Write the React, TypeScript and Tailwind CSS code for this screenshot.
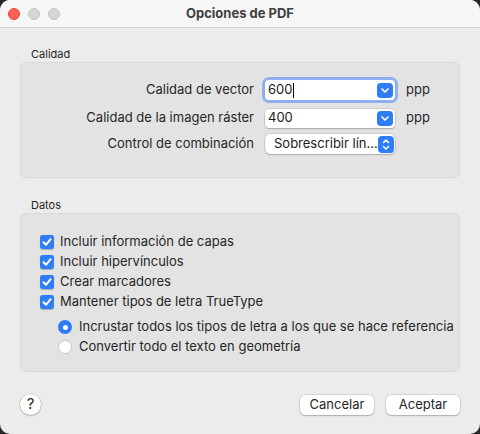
import React from "react";

const font = { fontFamily: "Inter, 'Noto Sans', sans-serif" };

const ChevronDown = () => (
  <svg width="16" height="15" viewBox="0 0 16 15">
    <path d="M5 6 L8 9 L11 6" fill="none" stroke="white" strokeWidth="1.7" strokeLinecap="round" strokeLinejoin="round" />
  </svg>
);

const UpDown = () => (
  <svg width="16" height="17" viewBox="0 0 16 17">
    <path d="M5.5 6.5 L8 4 L10.5 6.5" fill="none" stroke="white" strokeWidth="1.5" strokeLinecap="round" strokeLinejoin="round" />
    <path d="M5.5 10.5 L8 13 L10.5 10.5" fill="none" stroke="white" strokeWidth="1.5" strokeLinecap="round" strokeLinejoin="round" />
  </svg>
);

const Check = () => (
  <svg width="14" height="14" viewBox="0 0 14 14">
    <path d="M3.5 7.2 L6 9.8 L10.6 4.2" fill="none" stroke="white" strokeWidth="2" strokeLinecap="round" strokeLinejoin="round" />
  </svg>
);

const Checkbox: React.FC<{ label: string }> = ({ label }) => (
  <div className="flex h-[20px] items-center">
    <span className="flex h-[14px] w-[14px] items-center justify-center rounded-[3px] bg-[#2f7df6] shadow-[0_0.5px_1px_rgba(0,0,0,0.25)]">
      <Check />
    </span>
    <span className="ml-[6px] text-[13px] text-[#262626]">{label}</span>
  </div>
);

const Radio: React.FC<{ label: string; checked?: boolean }> = ({ label, checked }) => (
  <div className="flex h-[20px] items-center pl-[18px]">
    {checked ? (
      <span className="flex h-[14px] w-[14px] shrink-0 items-center justify-center rounded-full bg-[#2f7df6]">
        <span className="h-[5px] w-[5px] rounded-full bg-white" />
      </span>
    ) : (
      <span className="h-[14px] w-[14px] shrink-0 rounded-full border border-[#c8c8c8] bg-white" />
    )}
    <span className="ml-[7px] whitespace-nowrap text-[13px] text-[#262626]">{label}</span>
  </div>
);

const fieldShadow = "shadow-[0_0_0_0.5px_rgba(0,0,0,0.18),0_1px_1.5px_rgba(0,0,0,0.18)]";

export default function App() {
  return (
    <div className="h-[434px] w-[480px] bg-[#262626]" style={font}>
      <div className="flex h-full w-full flex-col overflow-hidden rounded-[10px] bg-[#ececec]">
        {/* title bar */}
        <div className="grid h-[28px] grid-cols-[1fr_auto_1fr] items-center border-b border-[#d4d4d4] bg-[#f6f6f6]">
          <div className="flex items-center gap-[8px] pl-[8px]">
            <span className="h-[12px] w-[12px] rounded-full border border-[#e2463f] bg-[#ff5f57]" />
            <span className="h-[12px] w-[12px] rounded-full border border-[#c4c4c4] bg-[#d6d6d6]" />
            <span className="h-[12px] w-[12px] rounded-full border border-[#c4c4c4] bg-[#d6d6d6]" />
          </div>
          <div className="text-[13px] font-bold text-[#3f3f3f]">Opciones de PDF</div>
          <div />
        </div>

        <div className="flex flex-1 flex-col px-[20px]">
          {/* Calidad */}
          <div className="mt-[20px] h-[13px] pl-[11px] text-[11px] leading-[13px] text-[#262626]">Calidad</div>
          <div className="mt-[1px] h-[116px] rounded-[6px] border border-[#d9d9d9] bg-[#e3e3e3] pt-[17px]">
            <div className="flex h-[20px] items-center">
              <div className="w-[233px] text-right text-[13px] text-[#262626]">Calidad de vector</div>
              <div className="ml-[11px] flex h-[20px] w-[130px] items-center rounded-[4px] bg-white pl-[3px] pr-[2px] shadow-[0_0_0_3px_#8eb0ee]">
                <span className="text-[13px] text-[#1a1a1a]">600</span>
                <span className="ml-[1px] h-[15px] w-[1px] bg-black" />
                <span className="ml-auto flex h-[15px] w-[16px] items-center justify-center rounded-[4px] bg-[#2f7df6]">
                  <ChevronDown />
                </span>
              </div>
              <div className="ml-[11px] text-[13px] text-[#262626]">ppp</div>
            </div>
            <div className="mt-[8px] flex h-[20px] items-center">
              <div className="w-[233px] text-right text-[13px] text-[#262626]">Calidad de la imagen ráster</div>
              <div className={`ml-[11px] flex h-[19px] w-[130px] items-center rounded-[4px] bg-white pl-[3px] pr-[2px] ${fieldShadow}`}>
                <span className="text-[13px] text-[#1a1a1a]">400</span>
                <span className="ml-auto flex h-[15px] w-[16px] items-center justify-center rounded-[4px] bg-[#2f7df6]">
                  <ChevronDown />
                </span>
              </div>
              <div className="ml-[11px] text-[13px] text-[#262626]">ppp</div>
            </div>
            <div className="mt-[6px] flex h-[20px] items-center">
              <div className="w-[233px] text-right text-[13px] text-[#262626]">Control de combinación</div>
              <div className={`ml-[11px] flex h-[20px] w-[130px] items-center rounded-[5px] bg-white pl-[9px] pr-[2px] ${fieldShadow}`}>
                <span className="whitespace-nowrap text-[13px] text-[#1a1a1a]">Sobrescribir lín...</span>
                <span className="ml-auto flex h-[17px] w-[16px] items-center justify-center rounded-[4px] bg-[#2f7df6]">
                  <UpDown />
                </span>
              </div>
            </div>
          </div>

          {/* Datos */}
          <div className="mt-[21px] h-[13px] pl-[11px] text-[11px] leading-[13px] text-[#262626]">Datos</div>
          <div className="mt-[1px] flex h-[159px] flex-col overflow-hidden rounded-[6px] border border-[#d9d9d9] bg-[#e3e3e3] pl-[19px] pt-[18px]">
            <Checkbox label="Incluir información de capas" />
            <Checkbox label="Incluir hipervínculos" />
            <Checkbox label="Crear marcadores" />
            <Checkbox label="Mantener tipos de letra TrueType" />
            <div className="mt-[5px]">
              <Radio label="Incrustar todos los tipos de letra a los que se hace referencia" checked />
              <Radio label="Convertir todo el texto en geometría" />
            </div>
          </div>

          {/* buttons */}
          <div className="mt-[22px] flex items-center">
            <button className="flex h-[21px] w-[21px] items-center justify-center rounded-full bg-white text-[15px] text-[#262626] shadow-[0_0_0_0.5px_rgba(0,0,0,0.15),0_1px_2px_rgba(0,0,0,0.2)]">
              ?
            </button>
            <button className={`ml-auto h-[20px] w-[74px] rounded-[5px] bg-white text-[13px] text-[#262626] ${fieldShadow}`}>
              Cancelar
            </button>
            <button className={`ml-[12px] h-[20px] w-[74px] rounded-[5px] bg-white text-[13px] text-[#262626] ${fieldShadow}`}>
              Aceptar
            </button>
          </div>
        </div>
      </div>
    </div>
  );
}
